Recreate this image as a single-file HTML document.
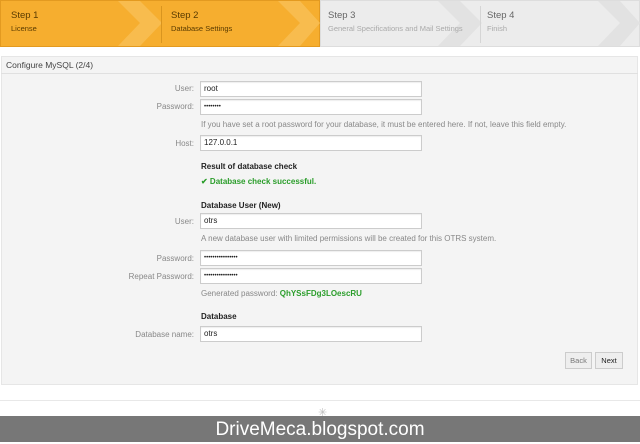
<!DOCTYPE html>
<html><head><style>
*{margin:0;padding:0;box-sizing:border-box}
body{width:640px;height:442px;overflow:hidden;background:#fff;font-family:"Liberation Sans",sans-serif;font-size:8px;color:#333;position:relative}
.abs{position:absolute}
.step{position:absolute;top:0;height:47px;padding:10px 0 0 11px;overflow:hidden}
.step b{font-weight:normal;font-size:9.5px;display:block}
.step span{font-size:7.5px;display:block;margin-top:3px}
.lab{position:absolute;right:446px;color:#888;font-size:8px;text-align:right}
.inp{position:absolute;left:200px;width:222px;height:16px;border:1px solid #ccc;background:#fff;font-size:8px;padding:2px 3px;color:#222;box-shadow:inset 0 1px 1px #eee}
.hint{position:absolute;left:201px;color:#888;font-size:8px}
.h{position:absolute;left:201px;font-weight:bold;font-size:8px;color:#222}
.btn{position:absolute;top:352px;height:17px;border:1px solid #ccc;background:#eee;font-size:7.5px;text-align:center;line-height:15px}
</style></head><body>
<div class="abs" style="left:0;top:0;width:320px;height:47px;background:#f6ae2f;border:1px solid #e39a20"></div>
<div class="abs" style="left:320px;top:0;width:320px;height:47px;background:#ececec;border:1px solid #ddd"></div>
<svg class="abs" style="left:0;top:0" width="640" height="47">
<polygon points="118,1 140,1 162,23 140,46 118,46 140,23" fill="#f8bc4e"/>
<polygon points="278,1 300,1 320,23 300,46 278,46 300,23" fill="#f8bc4e"/>
<polygon points="438,1 460,1 482,23 460,46 438,46 460,23" fill="#e2e2e2"/>
<polygon points="598,1 620,1 640,23 620,46 598,46 620,23" fill="#e2e2e2"/>
<line x1="161.5" y1="6" x2="161.5" y2="43" stroke="#d9951f"/>
<line x1="480.5" y1="6" x2="480.5" y2="43" stroke="#d5d5d5"/>
</svg>
<div class="step" style="left:0;color:#5a3b00"><b>Step 1</b><span>License</span></div>
<div class="step" style="left:160px;color:#5a3b00"><b>Step 2</b><span>Database Settings</span></div>
<div class="step" style="left:317px;color:#666"><b>Step 3</b><span style="color:#aaa">General Specifications and Mail Settings</span></div>
<div class="step" style="left:476px;color:#666"><b>Step 4</b><span style="color:#aaa">Finish</span></div>

<div class="abs" style="left:1px;top:56px;width:637px;height:329px;background:#f4f4f4;border:1px solid #e6e6e6"></div>
<div class="abs" style="left:1px;top:56px;width:637px;height:18px;border-bottom:1px solid #e0e0e0;padding:4px 5px;font-size:8.5px;color:#444">Configure MySQL (2/4)</div>

<div class="lab" style="top:84px">User:</div><div class="inp" style="top:81px">root</div>
<div class="lab" style="top:102px">Password:</div><div class="inp" style="top:99px;font-size:6px;line-height:10px">••••••••</div>
<div class="hint" style="top:120px">If you have set a root password for your database, it must be entered here. If not, leave this field empty.</div>
<div class="lab" style="top:139px">Host:</div><div class="inp" style="top:135px">127.0.0.1</div>
<div class="h" style="top:162px">Result of database check</div>
<div class="h" style="top:177px;color:#2a9d2a">✔ Database check successful.</div>
<div class="h" style="top:201px">Database User (New)</div>
<div class="lab" style="top:217px">User:</div><div class="inp" style="top:213px">otrs</div>
<div class="hint" style="top:234px">A new database user with limited permissions will be created for this OTRS system.</div>
<div class="lab" style="top:254px">Password:</div><div class="inp" style="top:250px;font-size:6px;line-height:10px">••••••••••••••••</div>
<div class="lab" style="top:272px">Repeat Password:</div><div class="inp" style="top:268px;font-size:6px;line-height:10px">••••••••••••••••</div>
<div class="hint" style="top:289px">Generated password: <b style="color:#2a9d2a">QhYSsFDg3LOescRU</b></div>
<div class="h" style="top:312px">Database</div>
<div class="lab" style="top:330px">Database name:</div><div class="inp" style="top:326px">otrs</div>
<div class="btn" style="left:565px;width:27px;color:#777">Back</div>
<div class="btn" style="left:595px;width:28px;color:#222">Next</div>

<div class="abs" style="left:0;top:400px;width:640px;height:1px;background:#e8e8e8"></div>
<div class="abs" style="left:318px;top:406px;color:#bbb;font-size:11px">✳</div>
<div class="abs" style="left:0;top:416px;width:640px;height:26px;background:#777;color:#fff;font-size:19px;text-align:center;line-height:28px">DriveMeca.blogspot.com</div>
</body></html>
